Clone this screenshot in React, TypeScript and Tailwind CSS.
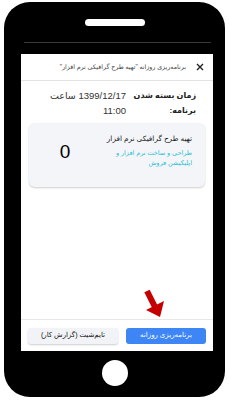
import React from "react";

const fa = { fontFamily: '"Liberation Sans", "DejaVu Sans", sans-serif' };

export default function App() {
  return (
    <div className="w-[229px] h-[400px] bg-white overflow-hidden" style={fa}>
      <div className="ml-[4px] mt-[2px] w-[221px] h-[395px] bg-black rounded-[26px] flex flex-col items-center">
        <div className="mt-[17px] w-[60px] h-[7px] rounded-full bg-white" />
        <div className="mt-[16px] ml-[6px] w-[187px] h-px bg-[#3a3a3a]" />
        <div className="mt-[11px] ml-[5px] w-[192px] h-[297px] bg-white flex flex-col relative" dir="rtl">
          <div className="h-[27px] shrink-0 border-b border-[#e3e3e3] flex items-center pr-[9px] pl-[8px] gap-[10px]">
            <svg width="8" height="8" viewBox="0 0 8 8" className="shrink-0">
              <path d="M1 1 L7 7 M7 1 L1 7" stroke="#222" strokeWidth="1.4" />
            </svg>
            <div className="text-[6.3px] text-[#444] whitespace-nowrap">
              برنامه‌ریزی روزانه "تهیه طرح گرافیکی نرم افزار"
            </div>
          </div>
          <div className="flex-1 flex flex-col px-[8px]">
            <div className="flex pt-[7px] pr-[9px] leading-[15px] text-[#222]">
              <div className="w-[70px] shrink-0 font-bold whitespace-nowrap text-[8px]">
                زمان بسته شدن
                <br />
                برنامه:
              </div>
              <div className="w-[80px] text-[#333] text-[9.5px] whitespace-nowrap">
                1399/12/17 ساعت
                <br />
                11:00
              </div>
            </div>
            <div className="mt-[5px] h-[64px] rounded-[6px] bg-[#f3f5f8] shadow-[0_1px_2px_rgba(0,0,0,0.2)] flex pr-[13px] pt-[10px]">
              <div className="flex-1 flex flex-col">
                <div className="text-[7.3px] leading-[12px] text-[#222]">تهیه طرح گرافیکی نرم افزار</div>
                <div className="mt-[3px] text-[6.5px] leading-[10px] text-[#2bbfd6] w-[84px]">
                  طراحی و ساخت نرم افزار و اپلیکیشن فروش
                </div>
              </div>
              <div className="w-[72px] shrink-0 flex items-start justify-center pt-[9px]">
                <span className="text-[19px] leading-[20px] text-black">0</span>
              </div>
            </div>
          </div>
          <div className="h-[32px] shrink-0 border-t border-[#e8e8e8] flex items-center px-[7px] gap-[8px]">
            <div className="w-[80px] h-[16px] rounded-[3px] bg-[#3e86f5] text-white text-[7px] flex items-center justify-center whitespace-nowrap">
              برنامه‌ریزی روزانه
            </div>
            <div className="w-[90px] h-[16px] rounded-[3px] bg-[#f2f3f6] shadow-[0_1px_2px_rgba(0,0,0,0.2)] text-[#111] text-[7px] flex items-center justify-center whitespace-nowrap">
              تایم‌شیت (گزارش کار)
            </div>
          </div>
          <svg
            className="absolute left-[121px] top-[235px]"
            width="26"
            height="30"
            viewBox="0 0 26 30"
          >
            <path d="M5 2 L13 18" stroke="#c40000" strokeWidth="6" />
            <polygon points="4,21 22,12 18,28" fill="#c40000" />
          </svg>
        </div>
        <div className="mt-[9px] w-[26px] h-[26px] rounded-full bg-white" />
      </div>
    </div>
  );
}
